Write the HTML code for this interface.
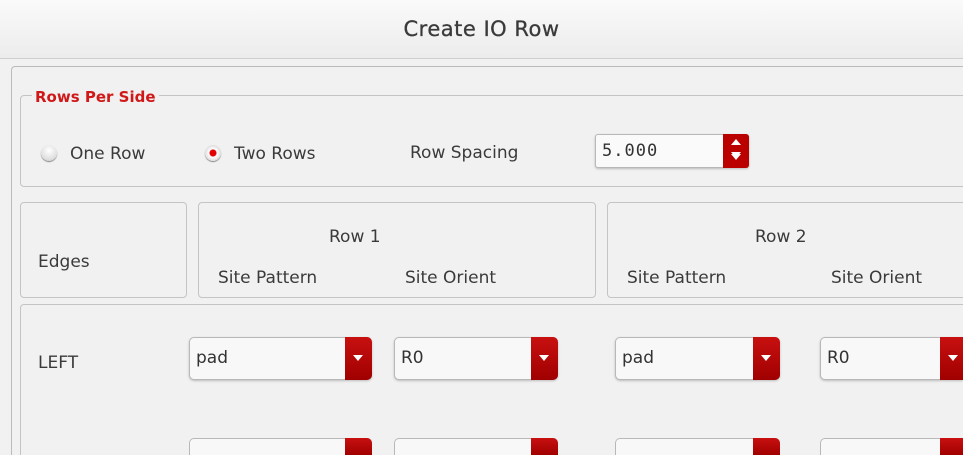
<!DOCTYPE html><html><head><style>
html,body{margin:0;width:963px;height:455px;overflow:hidden}
body{background:#f1f1f1;font-family:"DejaVu Sans",sans-serif;position:relative;color:#333}
.a{position:absolute}
.title{left:0;top:0;width:963px;height:58px;background:linear-gradient(#fafafa,#ececec);border-bottom:1px solid #cfcfcf;text-align:center;line-height:58px;font-size:21px;color:#3a3a3a;letter-spacing:0.5px;-webkit-text-stroke:0.3px #3a3a3a}
.box{position:absolute;border:1px solid #c4c4c4;border-radius:4px;box-sizing:border-box}
.t{position:absolute;font-size:17px;color:#3a3a3a;white-space:nowrap}
.combo{position:absolute;height:43px;background:#f8f8f8;border:1px solid #b8b8b8;border-radius:5px;box-sizing:border-box;box-shadow:0 1px 2px #bbb}
.combo span{position:absolute;left:6px;top:10px;font-size:17px;color:#333}
.combo i{position:absolute;right:-1px;top:-1px;bottom:-1px;width:27px;background:linear-gradient(#c81010,#a00000);border-radius:0 5px 5px 0}
.combo i:after{content:"";position:absolute;left:8px;top:18px;border-left:5px solid transparent;border-right:5px solid transparent;border-top:6px solid #fff}
.radio{position:absolute;width:16px;height:16px;border-radius:50%;background:radial-gradient(circle at 50% 35%,#fff,#ddd 70%,#aaa);box-shadow:0 1px 1px #888}
.low{height:17px;border-bottom:none;border-radius:5px 5px 0 0;box-shadow:none}
.low i{bottom:0;border-radius:0 5px 0 0}
</style></head><body>
<div class="a title">Create IO Row</div>
<div class="box" style="left:11px;top:66px;width:952px;height:389px;border-color:#bbb;border-right:none;border-bottom:none;border-radius:4px 0 0 0"></div>
<div class="box" style="left:20px;top:95px;width:960px;height:92px"></div>
<div class="t" style="left:32px;top:88px;background:#f1f1f1;padding:0 3px;color:#d01818;font-weight:bold;font-size:15px">Rows Per Side</div>
<div class="radio" style="left:41px;top:145px"></div><div class="t" style="left:70px;top:144px">One Row</div>
<div class="radio" style="left:205px;top:145px;background:radial-gradient(circle,#e00000 0 3px,#fff 4px,#ddd 70%,#aaa)"></div><div class="t" style="left:234px;top:144px">Two Rows</div>
<div class="t" style="left:410px;top:143px">Row Spacing</div>
<div class="combo" style="left:595px;top:134px;width:154px;height:34px;background:#fafafa;border-radius:3px"><span style="top:6px;font-family:'DejaVu Sans Mono',monospace;letter-spacing:1px">5.000</span><i style="width:26px;border-radius:0 3px 3px 0;background:#b00"></i></div>
<div class="a" style="left:731px;top:139px;border-left:5px solid transparent;border-right:5px solid transparent;border-bottom:6px solid #fff"></div>
<div class="a" style="left:731px;top:154px;border-left:5px solid transparent;border-right:5px solid transparent;border-top:6px solid #fff"></div>
<div class="box" style="left:20px;top:202px;width:167px;height:96px"></div>
<div class="t" style="left:38px;top:252px">Edges</div>
<div class="box" style="left:198px;top:202px;width:398px;height:96px"></div>
<div class="t" style="left:329px;top:227px">Row 1</div>
<div class="t" style="left:218px;top:268px">Site Pattern</div>
<div class="t" style="left:405px;top:268px">Site Orient</div>
<div class="box" style="left:607px;top:202px;width:370px;height:96px"></div>
<div class="t" style="left:755px;top:227px">Row 2</div>
<div class="t" style="left:627px;top:268px">Site Pattern</div>
<div class="t" style="left:831px;top:268px">Site Orient</div>
<div class="box" style="left:20px;top:304px;width:943px;height:151px;border-right:none;border-bottom:none;border-radius:4px 0 0 0"></div>
<div class="t" style="left:38px;top:353px">LEFT</div>
<div class="combo" style="left:189px;top:337px;width:183px"><span>pad</span><i></i></div>
<div class="combo" style="left:394px;top:337px;width:164px"><span>R0</span><i></i></div>
<div class="combo" style="left:615px;top:337px;width:165px"><span>pad</span><i></i></div>
<div class="combo" style="left:820px;top:337px;width:143px;border-right:none;border-radius:5px 0 0 5px"><span>R0</span><i style="right:0;width:23px;border-radius:0"></i></div>
<div class="combo low" style="left:189px;top:438px;width:183px"><i></i></div>
<div class="combo low" style="left:394px;top:438px;width:164px"><i></i></div>
<div class="combo low" style="left:615px;top:438px;width:165px"><i></i></div>
<div class="combo low" style="left:820px;top:438px;width:143px;border-right:none;border-radius:5px 0 0 0"><i style="right:0;width:23px;border-radius:0"></i></div>
</body></html>
